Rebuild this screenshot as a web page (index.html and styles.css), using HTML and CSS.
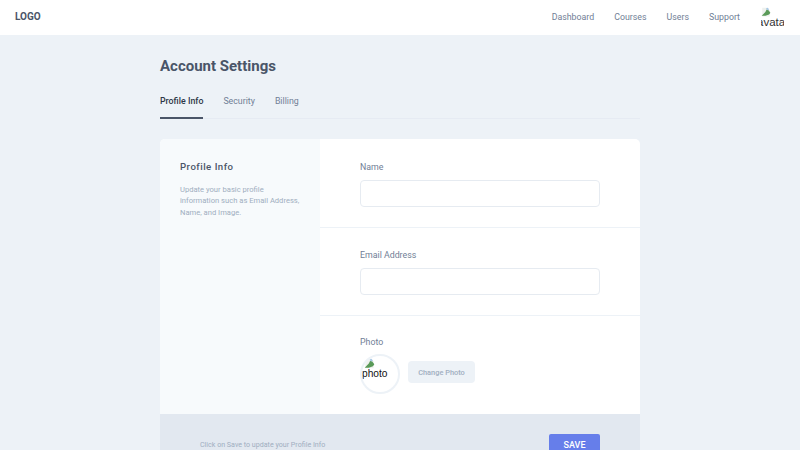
FILE: index.html
```html
<!DOCTYPE html>
<html lang="en">
<head>
<meta charset="utf-8">
<title>Account Settings</title>
<link rel="stylesheet" href="styles.css">
</head>
<body>
<header class="topbar">
  <div class="logo">LOGO</div>
  <nav class="nav">
    <a class="nav-link">Dashboard</a>
    <a class="nav-link">Courses</a>
    <a class="nav-link">Users</a>
    <a class="nav-link">Support</a>
    <div class="avatar">
      <svg class="broken" viewBox="0 0 16 16" width="10" height="10"><path d="M2 1h8l4 4v10H2z" fill="#eef1ee"/><path d="M1 14l6-6 2-4 3 1 3 4-2 3-6 2z" fill="#5a9a58"/><path d="M8 2l3-1 2 3-3 1z" fill="#a9c9e6"/></svg>
      <span class="avatar-alt">avatar</span>
    </div>
  </nav>
</header>
<main class="page">
  <h1 class="title">Account Settings</h1>
  <div class="tabs">
    <a class="tab tab-active">Profile Info</a>
    <a class="tab">Security</a>
    <a class="tab">Billing</a>
  </div>
  <section class="card">
    <div class="card-body">
      <aside class="side">
        <h2 class="side-title">Profile Info</h2>
        <p class="side-text">Update your basic profile information such as Email Address, Name, and Image.</p>
      </aside>
      <div class="form">
        <div class="field field-name">
          <label class="label">Name</label>
          <div class="input"></div>
        </div>
        <div class="field field-email">
          <label class="label">Email Address</label>
          <div class="input"></div>
        </div>
        <div class="field field-photo">
          <label class="label">Photo</label>
          <div class="photo-row">
            <div class="photo">
              <svg class="broken" viewBox="0 0 16 16" width="11" height="11"><path d="M2 1h8l4 4v10H2z" fill="#eef1ee"/><path d="M1 14l6-6 2-4 3 1 3 4-2 3-6 2z" fill="#5a9a58"/><path d="M8 2l3-1 2 3-3 1z" fill="#a9c9e6"/></svg>
              <span class="photo-alt">photo</span>
            </div>
            <button class="change">Change Photo</button>
          </div>
        </div>
      </div>
    </div>
    <div class="card-foot">
      <span class="foot-text">Click on Save to update your Profile Info</span>
      <button class="save">SAVE</button>
    </div>
  </section>
</main>
</body>
</html>
```
FILE: styles.css
```css
* { box-sizing: border-box; }
html, body { margin: 0; height: 450px; overflow: hidden; }
body { background: #edf2f7; font-family: Roboto, sans-serif; color: #4a5568; }
.topbar { height: 35px; background: #fff; display: flex; justify-content: space-between; align-items: center; padding: 0 16px 2px 15px; }
.logo { font-size: 10px; font-weight: 700; color: #4a5568; }
.nav { display: flex; align-items: center; gap: 20px; }
.nav-link { font-size: 8.8px; color: #718096; }
.avatar { width: 23px; height: 24px; overflow: hidden; margin-left: 1px; padding-top: 2px; }
.broken { display: block; }
.avatar-alt { display: block; margin-left: -4px; font-family: "Liberation Sans", sans-serif; font-size: 11.5px; line-height: 11px; color: #333; white-space: nowrap; }
.page { width: 480px; margin: 0 auto; }
.title { margin: 0; padding-top: 21px; font-size: 15px; line-height: 20px; font-weight: 700; color: #4a5568; }
.tabs { display: flex; gap: 20px; margin-top: 15px; border-bottom: 1px solid #e6ebf3; height: 28px; }
.tab { font-size: 8.8px; line-height: 12px; color: #718096; height: 27px; padding-top: 4px; }
.tab-active { color: #2d3748; font-weight: 500; border-bottom: 2px solid #4a5568; height: 28px; }
.card { margin-top: 20px; border-radius: 5px 5px 0 0; overflow: hidden; background: #fff; }
.card-body { display: flex; height: 275px; }
.side { width: 160px; background: #f7fafc; padding: 20px; }
.side-title { margin: 0; font-size: 9.6px; line-height: 15px; font-weight: 500; letter-spacing: .5px; color: #4a5568; }
.side-text { margin: 10px 0 0; font-size: 7.6px; line-height: 11.4px; color: #a0aec0; }
.form { flex: 1; }
.field { padding: 0 40px; border-bottom: 1px solid #edf2f7; }
.field-name { height: 89px; padding-top: 21px; }
.field-email { height: 88px; padding-top: 20px; }
.field-photo { border-bottom: 0; height: 98px; padding-top: 19px; }
.label { display: block; font-size: 8.8px; line-height: 14px; color: #718096; }
.input { margin-top: 6px; height: 27px; border: 1px solid #e6ebf1; border-radius: 4px; background: #fff; }
.photo-row { display: flex; align-items: center; gap: 8px; margin-top: 5px; }
.photo { width: 40px; height: 40px; border: 2px solid #edf2f7; border-radius: 50%; overflow: hidden; padding: 2px 0 0 0; }
.photo .broken { margin-left: 2px; }
.photo-alt { display: block; font-family: "Liberation Sans", sans-serif; font-size: 10.2px; line-height: 9px; color: #111; }
.change { border: 0; border-radius: 4px; background: #edf2f7; color: #a0aec0; font: 500 7.4px Roboto, sans-serif; height: 22px; width: 67px; padding: 0; margin-bottom: 4px; }
.card-foot { height: 36px; background: #e2e8f0; display: flex; justify-content: space-between; padding: 20px 40px 0; align-items: flex-start; }
.foot-text { font-size: 7.1px; line-height: 22px; color: #a0aec0; }
.save { border: 0; border-radius: 2px; background: #667eea; color: #fff; font: 500 9px Roboto, sans-serif; width: 51px; height: 22px; padding: 0; }
```
